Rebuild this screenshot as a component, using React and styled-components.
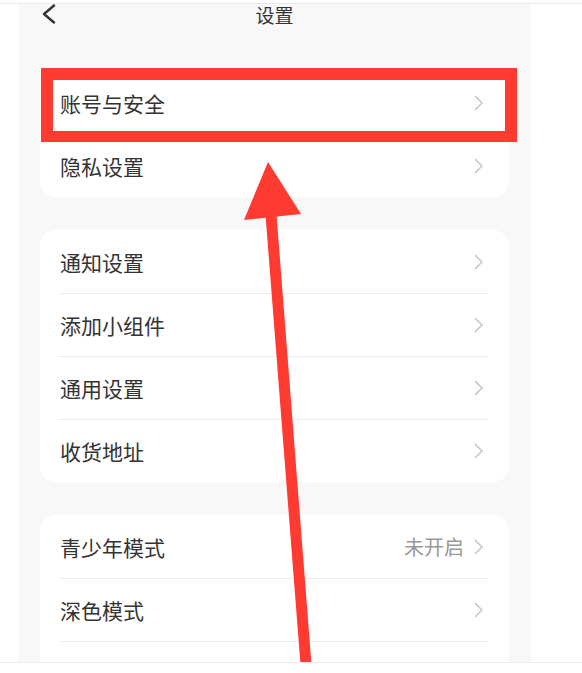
import React from "react"
import styled, { createGlobalStyle } from "styled-components"

const GlobalStyle = createGlobalStyle`
  * { box-sizing: border-box; }
  body {
    margin: 0;
    background: #fff;
    font-family: "Noto Sans CJK SC", "Noto Sans", sans-serif;
  }
`

const Screen = styled.div`
  margin-top: 3px;
  height: 660px;
  border-top: 1px solid #e8e8e8;
  border-bottom: 1px solid #ebebf0;
`

const Phone = styled.div`
  position: relative;
  display: flex;
  flex-direction: column;
  margin-left: 18px;
  width: 513px;
  height: 100%;
  background: #f8f8f8;
`

const Header = styled.div`
  display: grid;
  grid-template-columns: 1fr auto 1fr;
  align-items: center;
  height: 20px;
  padding: 0 24px;
`

const Title = styled.h1`
  margin: 0;
  font-size: 19px;
  font-weight: 400;
  line-height: 19px;
  color: #333;
`

// the third group runs on under the bottom edge of the screenshot
const List = styled.div`
  flex: 1;
  min-height: 0;
  overflow: hidden;
  padding-top: 47px;
`

const Group = styled.div`
  margin: 0 22px;
  padding: 0 20px;
  background: #fff;
  border-radius: 16px;

  & + & {
    margin-top: 33px;
  }
`

const Row = styled.div`
  display: flex;
  align-items: center;
  height: 63px;

  & + & {
    border-top: 1px solid #ececec;
  }
`

const Label = styled.span`
  flex: 1;
  font-size: 21px;
  color: #333;
`

const Value = styled.span`
  margin-right: 10px;
  font-size: 20px;
  color: #999;
`

const Highlight = styled.div`
  position: absolute;
  left: 23px;
  top: 64px;
  width: 476px;
  height: 74px;
  border: 12px solid #fe3a31;
  border-bottom-width: 11px;
`

const Arrow = styled.svg`
  position: absolute;
  left: 0;
  top: 0;
  pointer-events: none;
`

const BackIcon = () => (
  <svg width="14" height="20" viewBox="0 0 14 20">
    <path d="M12 1.5 L2 10 L12 18.5" fill="none" stroke="#333" strokeWidth="2.4" strokeLinecap="round" strokeLinejoin="round" />
  </svg>
)

const Chevron = () => (
  <svg width="10" height="16" viewBox="0 0 10 16" style={{ marginRight: 5 }}>
    <path d="M1.5 1.5 L8 8 L1.5 14.5" fill="none" stroke="#c4c4c4" strokeWidth="1.5" strokeLinecap="round" strokeLinejoin="round" />
  </svg>
)

const groups = [
  [{ label: "账号与安全" }, { label: "隐私设置" }],
  [{ label: "通知设置" }, { label: "添加小组件" }, { label: "通用设置" }, { label: "收货地址" }],
  [{ label: "青少年模式", value: "未开启" }, { label: "深色模式" }, { label: "", hidden: true }],
]

export default function App() {
  return (
    <>
      <GlobalStyle />
      <Screen>
        <Phone>
          <Header>
            <BackIcon />
            <Title>设置</Title>
            <span />
          </Header>
          <List>
            {groups.map((items, i) => (
              <Group key={i}>
                {items.map((item, j) => (
                  <Row key={j}>
                    <Label>{item.label}</Label>
                    {item.value && <Value>{item.value}</Value>}
                    {!item.hidden && <Chevron />}
                  </Row>
                ))}
              </Group>
            ))}
          </List>
          <Highlight />
          <Arrow width="513" height="658" viewBox="18 4 513 658">
            <polygon points="265.6,216 276.6,216 311.3,662 300.3,662" fill="#fe3a31" />
            <polygon points="268,162 244,220 301,214" fill="#fe3a31" />
          </Arrow>
        </Phone>
      </Screen>
    </>
  )
}
